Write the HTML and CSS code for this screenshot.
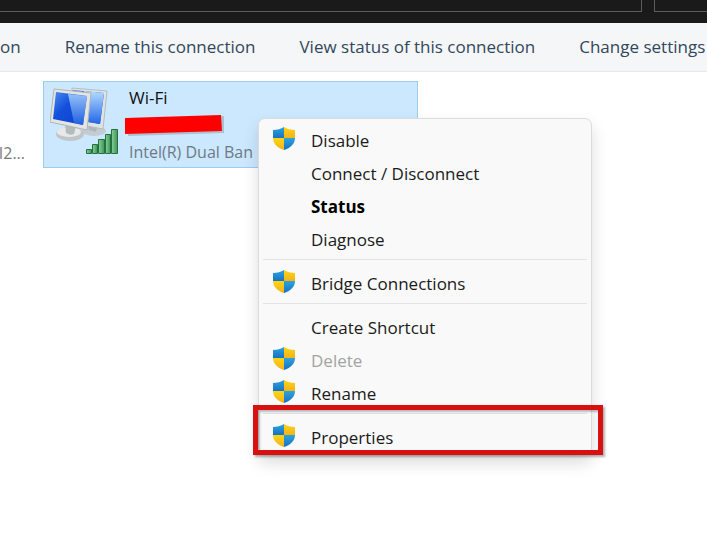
FILE: index.html
```
<!DOCTYPE html>
<html lang="en">
<head>
    <meta charset="utf-8">
    <title>Network Connections</title>
    <link rel="stylesheet" href="styles.css">
</head>
<body>
    <!-- shared symbols -->
    <svg class="defs" aria-hidden="true">
        <linearGradient id="blue" x1="0" y1="0" x2="0" y2="1">
            <stop offset="0" stop-color="#2fa3dc"/>
            <stop offset="1" stop-color="#1672c4"/>
        </linearGradient>
        <linearGradient id="gold" x1="0" y1="0" x2="0" y2="1">
            <stop offset="0" stop-color="#fdd514"/>
            <stop offset="1" stop-color="#f3b21c"/>
        </linearGradient>
        <symbol id="shield" viewBox="0 0 22 23">
            <path fill="url(#blue)" d="M11 0C8 2 4 3 0 3V11H11Z"/>
            <path fill="url(#gold)" d="M11 0C14 2 18 3 22 3V11H11Z"/>
            <path fill="url(#gold)" d="M0 11C0 17 5 21 11 23V11Z"/>
            <path fill="url(#blue)" d="M22 11C22 17 17 21 11 23V11Z"/>
        </symbol>
    </svg>

    <header class="address-bar">
        <div class="address-box"></div>
        <div class="search-box"></div>
    </header>

    <nav class="toolbar">
        <a href="#">on</a>
        <a href="#">Rename this connection</a>
        <a href="#">View status of this connection</a>
        <a href="#">Change settings</a>
    </nav>

    <main class="connections">
        <div class="previous">I2...</div>

        <div class="connection">
            <svg class="adapter" viewBox="0 0 72 68" aria-hidden="true">
                <defs>
                    <linearGradient id="screen" x1="0" y1="0" x2="1" y2="1">
                        <stop offset="0" stop-color="#4a8cf0"/>
                        <stop offset="0.4" stop-color="#1450dc"/>
                        <stop offset="1" stop-color="#0c3fc8"/>
                    </linearGradient>
                    <linearGradient id="shine" x1="0" y1="0" x2="0" y2="1">
                        <stop offset="0" stop-color="#b4dcff"/>
                        <stop offset="1" stop-color="#2266e8"/>
                    </linearGradient>
                    <linearGradient id="bars" x1="0" y1="0" x2="1" y2="0">
                        <stop offset="0" stop-color="#8ccf94"/>
                        <stop offset="1" stop-color="#3a9658"/>
                    </linearGradient>
                </defs>
                <ellipse cx="44" cy="45" rx="12" ry="5" fill="#c3ccd2"/>
                <path fill="#aeb7bd" d="M37 34L48 37L46 46L39 44Z"/>
                <path fill="#dfe3e4" stroke="#b4bcc0" d="M22 2L57 5L53 43L26 38Z"/>
                <path fill="url(#screen)" d="M23 4L54 7L50 38L27 34Z"/>
                <path fill="url(#shine)" d="M34 5L54 7L50 38L38 36Z"/>
                <ellipse cx="20" cy="48" rx="14" ry="7" fill="#bfc5c8"/>
                <ellipse cx="19" cy="46" rx="12" ry="5" fill="#e6e9e8"/>
                <path fill="#b4bbbf" d="M15 38L26 40L24 48Q20 50 16 47Z"/>
                <path fill="#e4e4e1" stroke="#b0b4b6" d="M4 3L41 7L37 44L0 36Z"/>
                <path fill="url(#screen)" d="M6 6L37 10L33 39L3 33Z"/>
                <path fill="url(#shine)" d="M18 8L37 10L33 39L24 37Z" opacity=".8"/>
                <g fill="url(#bars)" stroke="#247043">
                    <path d="M36.500 63.500H41.500V67.500H36.500Z"/>
                    <path d="M42.500 58.500H47.500V67.500H42.500Z"/>
                    <path d="M48.500 53.500H54.500V67.500H48.500Z"/>
                    <path d="M55.500 48.500H60.500V67.500H55.500Z"/>
                    <path d="M61.500 43.500H67.500V67.500H61.500Z"/>
                </g>
            </svg>

            <div class="details">
                <div class="name">Wi-Fi</div>
                <svg class="redacted" viewBox="0 0 100 22" aria-hidden="true">
                    <path fill="#98a5b0" opacity=".6" d="M3 6L99 2V19L3 22Z"/>
                    <path fill="#fe0000" d="M0 4L96 1L97 17L0 20Z"/>
                </svg>
                <div class="device">Intel(R) Dual Ban</div>
            </div>

            <div class="context-menu">
                <button class="menu-item"><svg class="shield"><use href="#shield"/></svg>Disable</button>
                <button class="menu-item">Connect / Disconnect</button>
                <button class="menu-item default">Status</button>
                <button class="menu-item">Diagnose</button>
                <hr>
                <button class="menu-item"><svg class="shield"><use href="#shield"/></svg>Bridge Connections</button>
                <hr>
                <button class="menu-item">Create Shortcut</button>
                <button class="menu-item" disabled><svg class="shield"><use href="#shield"/></svg>Delete</button>
                <button class="menu-item"><svg class="shield"><use href="#shield"/></svg>Rename</button>
                <hr>
                <button class="menu-item"><svg class="shield"><use href="#shield"/></svg>Properties</button>
                <div class="highlight"></div>
            </div>
        </div>
    </main>
</body>
</html>
```
FILE: styles.css
```
* {
    box-sizing: border-box;
}

body {
    margin: 0;
    min-height: 100vh;
    background-color: white;
    font-family: "Open Sans", "Noto Sans", sans-serif;
    font-size: 17px;
    line-height: 24px;
}

.defs {
    position: absolute;
    width: 0;
    height: 0;
}

.address-bar {
    display: flex;
    gap: 12px;
    height: 23px;
    padding-bottom: 11px;
    background-color: #1a1a1a;
}

.address-box {
    flex: 1;
    border: 1px solid #5c5c5c;
    border-width: 0 1px 1px 0;
}

.search-box {
    width: 53px;
    border: 1px solid #5c5c5c;
    border-width: 0 0 1px 1px;
}

.toolbar {
    display: flex;
    align-items: center;
    gap: 44px;
    height: 49px;
    background-color: #f4f6f8;
    border-bottom: 1px solid #e6e9ea;
    overflow: hidden;
}

.toolbar a {
    color: #33475b;
    text-decoration: none;
    white-space: nowrap;
}

.connections {
    display: flex;
    padding-top: 9px;
}

.previous {
    flex: none;
    width: 43px;
    padding: 60px 18px 0 0;
    color: #7a7a7a;
    font-size: 16px;
    display: flex;
    justify-content: flex-end;
}

.connection {
    position: relative;
    display: flex;
    width: 375px;
    height: 87px;
    padding: 4px 0 0 6px;
    background-color: #cce8ff;
    border: 1px solid #9ccdec;
}

.adapter {
    flex: none;
    width: 72px;
    height: 68px;
}

.details {
    padding-left: 7px;
    white-space: nowrap;
}

.name {
    color: #111;
}

.redacted {
    display: block;
    width: 100px;
    height: 22px;
    margin: 4px 0 4px -4px;
}

.device {
    color: #6d7a86;
    font-size: 16px;
}

.context-menu {
    position: absolute;
    top: 36px;
    left: 214px;
    width: 334px;
    padding: 5px 4px 0;
    background-color: #f9f9f9;
    border: 1px solid #dcdcdc;
    border-radius: 7px;
    box-shadow: 0 8px 16px rgba(0, 0, 0, 0.14);
}

.menu-item {
    position: relative;
    display: block;
    width: 100%;
    height: 33px;
    padding: 0 0 0 48px;
    background: none;
    border: 0;
    color: #1b1b1b;
    font: inherit;
    text-align: left;
}

.menu-item.default {
    color: #000;
    font-weight: bold;
}

.menu-item:disabled {
    color: #a3a3a3;
}

.shield {
    position: absolute;
    top: 3px;
    left: 10px;
    width: 22px;
    height: 23px;
}

.context-menu hr {
    height: 1px;
    margin: 3px 0 7px;
    background-color: #e2e2e2;
    border: 0;
}

/* red frame round Properties */
.highlight {
    position: absolute;
    left: -6px;
    right: -12px;
    bottom: -1px;
    height: 50px;
    border: 5px solid #d81010;
    box-shadow: 2px 2px 2px rgba(0, 0, 0, 0.3), inset 2px 2px 2px rgba(0, 0, 0, 0.25);
}
```
